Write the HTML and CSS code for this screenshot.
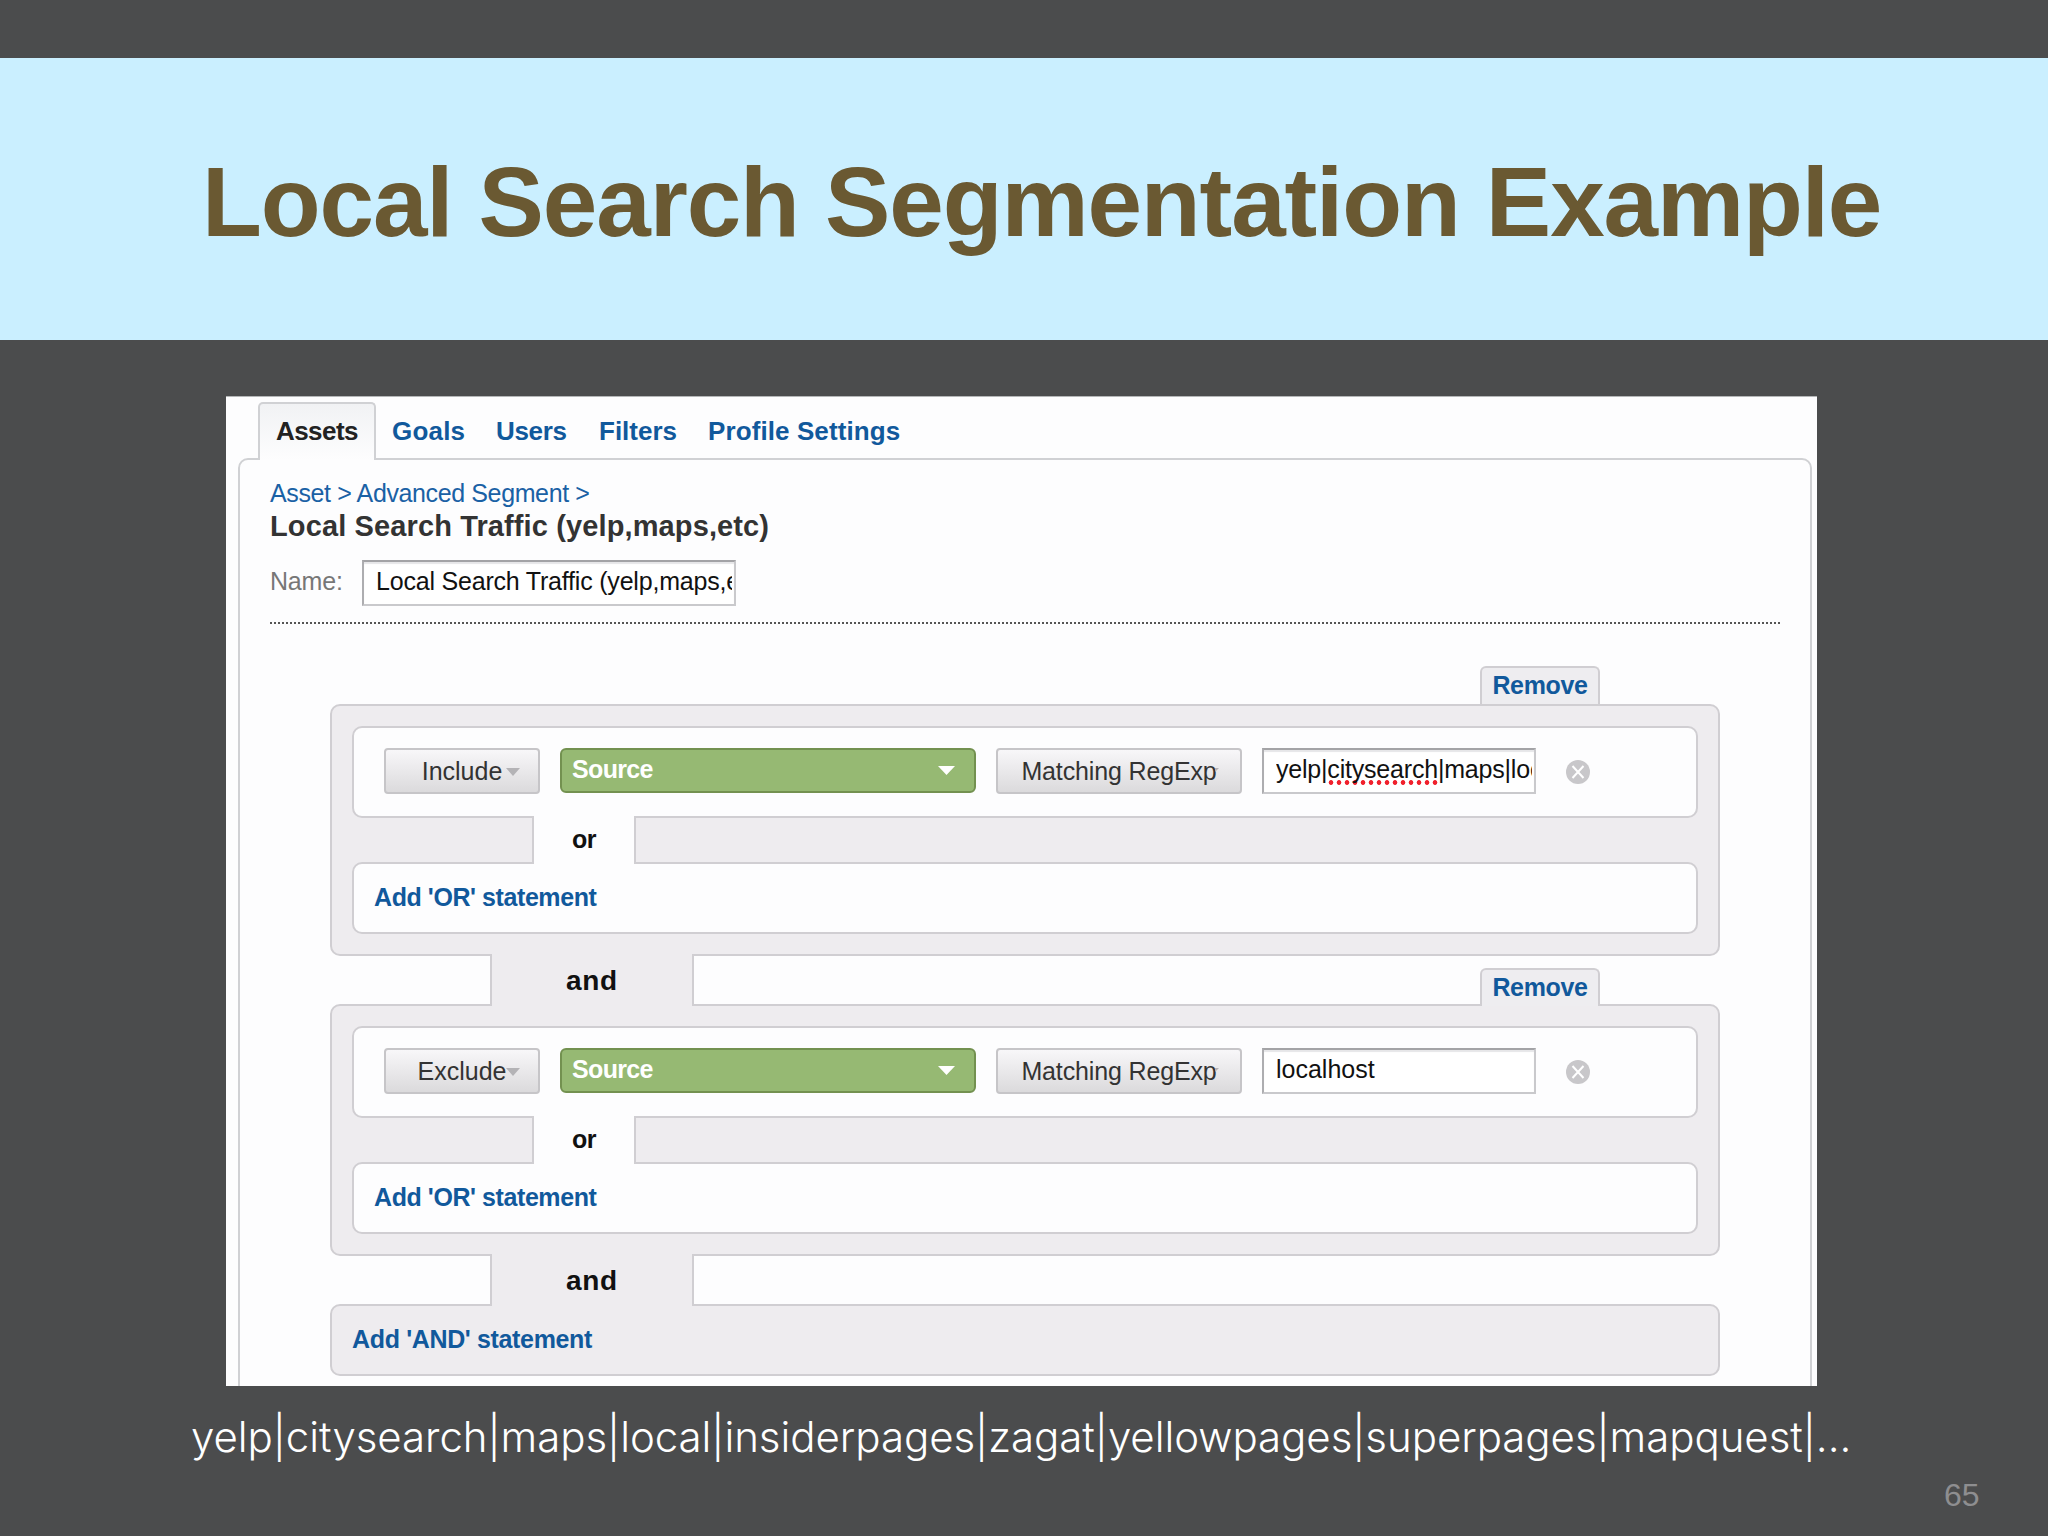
FILE: index.html
```html
<!DOCTYPE html>
<html lang="en">
<head>
<meta charset="utf-8">
<title>Local Search Segmentation Example</title>
<link rel="stylesheet" href="styles.css">
</head>
<body>
<main class="slide">
  <header class="banner"><h1 class="title">Local Search Segmentation Example</h1></header>

  <section class="shot">
    <nav class="tabs">
      <a class="tab tab-active">Assets</a>
      <a class="tab goals">Goals</a>
      <a class="tab users">Users</a>
      <a class="tab">Filters</a>
      <a class="tab profile">Profile Settings</a>
    </nav>
    <div class="panel">
      <div class="crumbs">Asset &gt; Advanced Segment &gt;</div>
      <h2 class="heading">Local Search Traffic (yelp,maps,etc)</h2>
      <div class="name-row">
        <span class="name-label">Name:</span>
        <div class="field name-field"><div class="field-text">Local Search Traffic (yelp,maps,etc)</div></div>
      </div>

      <div class="builder">
        <div class="bridge bridge-first"><a class="remove">Remove</a></div>
        <div class="group">
          <div class="card rule">
            <div class="button mode">Include<svg class="caret" width="14" height="8" viewBox="0 0 14 8"><path d="M0 0h14L7 8z"/></svg></div>
            <div class="source">Source<svg class="source-caret" width="17" height="9" viewBox="0 0 17 9"><path d="M0 0h17L8.500 9z"/></svg></div>
            <div class="button match">Matching RegExp<svg class="caret-tip" width="4" height="4" viewBox="0 0 4 4"><path d="M0 0h4L0 4z"/></svg></div>
            <div class="field value"><div class="field-text tight">yelp|<span class="misspelt">citysearch</span>|maps|local</div></div>
            <svg class="clear" width="24" height="24" viewBox="0 0 24 24"><circle cx="12" cy="12" r="12"/><path d="M6.500 6l11 12M17.500 6l-11 12"/></svg>
          </div>
          <div class="or">or</div>
          <div class="card add-or"><a class="link">Add 'OR' statement</a></div>
        </div>

        <div class="bridge">
          <div class="and">and</div>
          <a class="remove remove-open">Remove</a>
        </div>
        <div class="group">
          <div class="card rule">
            <div class="button mode">Exclude<svg class="caret" width="14" height="8" viewBox="0 0 14 8"><path d="M0 0h14L7 8z"/></svg></div>
            <div class="source">Source<svg class="source-caret" width="17" height="9" viewBox="0 0 17 9"><path d="M0 0h17L8.500 9z"/></svg></div>
            <div class="button match">Matching RegExp<svg class="caret-tip" width="4" height="4" viewBox="0 0 4 4"><path d="M0 0h4L0 4z"/></svg></div>
            <div class="field value"><div class="field-text">localhost</div></div>
            <svg class="clear" width="24" height="24" viewBox="0 0 24 24"><circle cx="12" cy="12" r="12"/><path d="M6.500 6l11 12M17.500 6l-11 12"/></svg>
          </div>
          <div class="or">or</div>
          <div class="card add-or"><a class="link">Add 'OR' statement</a></div>
        </div>

        <div class="bridge"><div class="and">and</div></div>
        <div class="group add-and"><a class="link">Add 'AND' statement</a></div>
      </div>
    </div>
  </section>

  <p class="caption">yelp|citysearch|maps|local|insiderpages|zagat|yellowpages|superpages|mapquest|...</p>
  <footer class="page-number">65</footer>
</main>
</body>
</html>
```
FILE: styles.css
```css
* { box-sizing: border-box; }

body {
  margin: 0;
  background: #4b4c4d;
  font-family: "Liberation Sans", Arial, sans-serif;
  font-size: 25px;
}

.slide {
  display: flex;
  flex-direction: column;
  width: 2048px;
  height: 1536px;
  padding-top: 58px;
  overflow: hidden;
}

.banner {
  flex: none;
  height: 282px;
  padding: 7px 0 0 202px;
  background: #caefff;
}

.title {
  margin: 0;
  font-size: 98px;
  line-height: 275px;
  letter-spacing: -1.1px;
  color: #6a5932;
  white-space: nowrap;
}

/* Segment editor */
.shot {
  flex: none;
  width: 1591px;
  height: 990px;
  margin: 56px 0 0 226px;
  padding-top: 6px;
  overflow: hidden;
  background: #fdfdfe;
  box-shadow: inset 0 1px #b4b6b7;
}

.tabs {
  position: relative;
  z-index: 1;
  display: grid;
  grid-template-columns: 134px 104px 103px 109px auto;
  height: 56px;
  padding-left: 32px;
}

.tab {
  font-size: 26px;
  font-weight: bold;
  line-height: 58px;
  color: #11599c;
  white-space: nowrap;
}

.tab-active {
  width: 118px;
  height: 58px;
  padding-left: 16px;
  border: solid #d0d1d4;
  border-width: 2px 2px 0;
  border-radius: 5px 5px 0 0;
  background: linear-gradient(#f1f2f4, #fdfdfe);
  line-height: 54px;
  letter-spacing: -0.56px;
  color: #222;
}

.goals { letter-spacing: 0.2px; }
.users { letter-spacing: -0.35px; }
.profile { letter-spacing: 0.1px; }

.panel {
  width: 1574px;
  height: 960px;
  margin-left: 12px;
  padding: 18px 30px 0;
  border: 2px solid #d0d1d4;
  border-radius: 10px;
}

.crumbs {
  line-height: 30px;
  letter-spacing: -0.38px;
  color: #1a61a5;
}

.heading {
  margin: 0;
  font-size: 29px;
  line-height: 36px;
  letter-spacing: 0.12px;
  color: #333;
}

.name-row {
  display: flex;
  height: 78px;
  padding: 16px 0;
}

.name-label {
  width: 92px;
  line-height: 43px;
  letter-spacing: -0.2px;
  color: #777;
}

.field {
  height: 46px;
  padding: 0 2px 0 12px;
  border: 2px solid #c9c9cc;
  border-top-color: #a3a3a6;
  border-left-color: #adadb0;
  background: #fff;
  box-shadow: inset 0 2px 1px #e6e6e8;
}

.field-text {
  overflow: hidden;
  line-height: 39px;
  color: #111;
  white-space: nowrap;
}

.name-field { width: 374px; letter-spacing: -0.2px; }
.name-field .field-text { line-height: 38px; }
.tight { letter-spacing: -0.2px; }

.misspelt {
  padding-bottom: 2px;
  background: radial-gradient(circle, #f0202c 2px, transparent 2.700px) 0 100% / 8px 5px repeat-x;
}

/* Rule builder */
.builder {
  width: 1510px;
  padding: 42px 60px 0;
  border-top: 2px dotted #555;
}

.bridge {
  position: relative;
  z-index: 1;
  display: flex;
  height: 48px;
  padding: 0 120px 0 160px;
}

.bridge-first { height: 38px; }

.and {
  width: 204px;
  height: 52px;
  margin-top: -2px;
  border: solid #d0ced2;
  border-width: 0 2px;
  background: #eeecef;
  font-size: 28px;
  font-weight: bold;
  line-height: 54px;
  letter-spacing: 0.7px;
  text-align: center;
  color: #111;
}

.remove {
  align-self: flex-end;
  width: 120px;
  height: 38px;
  margin-left: auto;
  border: solid #d0ced2;
  border-width: 2px 2px 0;
  border-radius: 6px 6px 0 0;
  background: #eeedf0;
  font-weight: bold;
  line-height: 34px;
  letter-spacing: -0.35px;
  text-align: center;
  color: #11599c;
}

.remove-open { margin-bottom: -2px; }

.group {
  height: 252px;
  padding: 20px;
  border: 2px solid #d0ced2;
  border-radius: 10px;
  background: #eeecef;
}

.card {
  border: 2px solid #d0ced2;
  border-radius: 10px;
  background: #fdfdfe;
}

.rule {
  display: flex;
  gap: 20px;
  height: 92px;
  padding: 20px 0 0 30px;
}

.button {
  position: relative;
  height: 46px;
  border: 2px solid #c6c5c8;
  border-radius: 4px;
  background: linear-gradient(#f8f7f9, #dbdadc);
  line-height: 42px;
  text-align: center;
  color: #333;
}

.mode { width: 156px; }
.match { width: 246px; letter-spacing: -0.14px; }

.caret {
  position: absolute;
  top: 18px;
  right: 18px;
  fill: #b4b3b6;
}

.caret-tip {
  position: absolute;
  top: 18px;
  right: 21px;
  fill: #b4b3b6;
}

.source {
  display: flex;
  justify-content: space-between;
  width: 416px;
  height: 45px;
  padding: 0 19px 0 10px;
  border: 2px solid #739150;
  border-radius: 6px;
  background: #96b973;
  font-weight: bold;
  line-height: 38px;
  letter-spacing: -0.65px;
  color: #fff;
}

.source-caret {
  margin-top: 16px;
  fill: #fff;
}

.value { width: 274px; }

.clear {
  margin: 12px 0 0 10px;
  fill: #c8c7ca;
}

.clear path {
  stroke: #fff;
  stroke-width: 2px;
}

.or {
  position: relative;
  z-index: 1;
  width: 104px;
  height: 48px;
  margin: -2px 0 -2px 180px;
  border: solid #d0ced2;
  border-width: 0 2px;
  background: #fdfdfe;
  font-weight: bold;
  line-height: 46px;
  letter-spacing: -0.6px;
  text-align: center;
  color: #111;
}

.add-or {
  height: 72px;
  padding-left: 20px;
  line-height: 66px;
}

.link {
  font-weight: bold;
  letter-spacing: -0.42px;
  color: #11599c;
}

.add-and {
  height: 72px;
  padding: 0 20px;
  line-height: 66px;
}

.add-and .link { letter-spacing: -0.35px; }

/* Slide footer */
.caption {
  margin: 21px 0 0 191px;
  font-family: Inter, "Liberation Sans", sans-serif;
  font-size: 42px;
  font-weight: 300;
  line-height: 60px;
  letter-spacing: -0.05px;
  color: #fff;
  white-space: nowrap;
}

.page-number {
  margin: 10px 0 0 1944px;
  font-size: 32px;
  line-height: 36px;
  color: #8e8e90;
}
```
